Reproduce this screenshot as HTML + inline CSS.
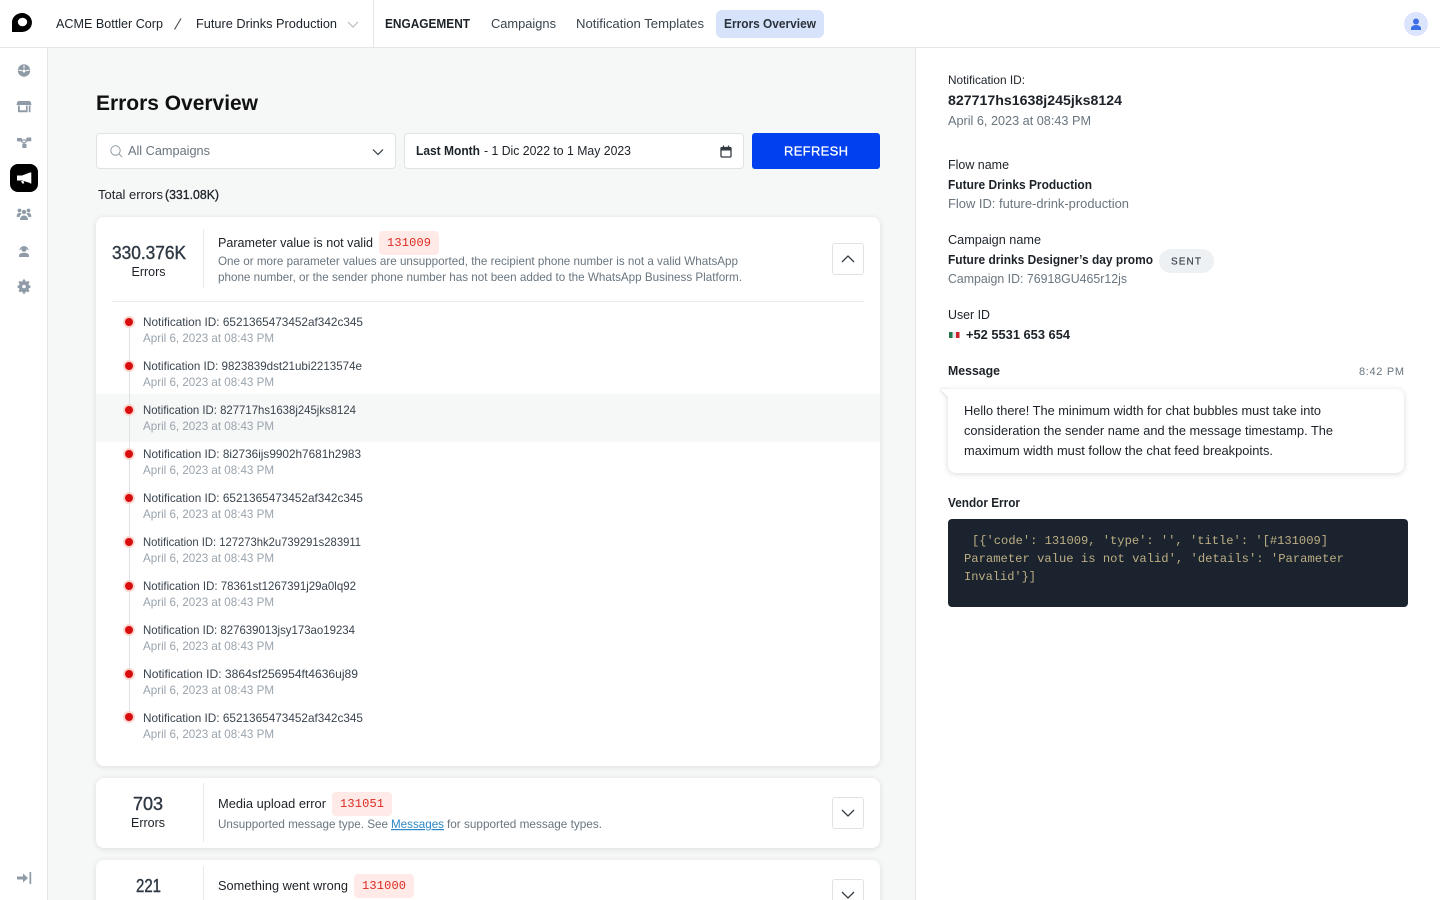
<!DOCTYPE html>
<html lang="en">
<head>
<meta charset="utf-8">
<title>Errors Overview</title>
<style>
html,body{margin:0;padding:0;width:1440px;height:900px;overflow:hidden;background:#fff}
body{font-family:"Liberation Sans",sans-serif;position:relative}
.b{position:absolute;box-sizing:border-box}
#main{left:48px;top:48px;width:867px;height:852px;background:#f6f7f7}
#hline{left:0;top:47px;width:1440px;height:1px;background:#e3e5e7}
#vline{left:47px;top:47px;width:1px;height:853px;background:#e3e5e7}
#rline{left:915px;top:47px;width:1px;height:853px;background:#e3e5e7}
#hdiv{left:373px;top:0;width:1px;height:47px;background:#e3e5e7}
#pill{left:716px;top:10px;width:108px;height:28px;background:#d7e3fa;border-radius:6px}
.field{background:#fff;border:1px solid #dfe3e7;border-radius:4px;height:36px;top:133px}
#refresh{left:752px;top:133px;width:128px;height:36px;background:#0040ee;border-radius:3px}
.card{left:96px;width:784px;background:#fff;border-radius:8px;box-shadow:0 1px 6px rgba(30,45,60,.12)}
#hl{left:96px;top:394px;width:784px;height:48px;background:#f6f7f7}
.vd{width:1px;background:#e8eaec;left:203px}
.chip{width:60px;height:24px;background:#ffeae8;border-radius:4px}
.btn{left:832px;width:32px;height:32px;background:#fff;border:1px solid #dfe3e7;border-radius:3px}
#sent{left:1159px;top:249px;width:55px;height:24px;background:#eef1f3;border-radius:12px}
#bubble{left:948px;top:389px;width:456px;height:84px;background:#fff;border-radius:0 8px 8px 8px;box-shadow:0 1px 6px rgba(30,45,60,.18)}
#code{left:948px;top:519px;width:460px;height:88px;background:#1a232e;border-radius:4px}
#layer{position:absolute;left:0;top:0}
text{font-family:"Liberation Sans",sans-serif;font-size:13px;fill:#1c2228}
.g{fill:#69757f;font-size:12px}
.h{fill:#9aa4ad;font-size:12px}
.n{fill:#3a444e;font-size:12px}
.bd{font-weight:bold}
.md{stroke-width:.3px;stroke:#1c2228}
.mono{font-family:"Liberation Mono",monospace;font-size:12px;fill:#dc2a20}
.code{font-family:"Liberation Mono",monospace;font-size:12px;fill:#bdae84}
.num{font-size:18px;fill:#2f3944;stroke:#2f3944;stroke-width:.4px}
.ic{fill:#8f9ba6}
</style>
</head>
<body>
<div class="b" id="main"></div>
<div class="b" id="hline"></div>
<div class="b" id="vline"></div>
<div class="b" id="rline"></div>
<div class="b" id="hdiv"></div>
<div class="b" id="pill"></div>

<div class="b field" style="left:96px;width:300px"></div>
<div class="b field" style="left:404px;width:340px"></div>
<div class="b" id="refresh"></div>

<div class="b card" style="top:217px;height:549px"></div>
<div class="b" id="hl"></div>
<div class="b vd" style="top:229px;height:59px"></div>
<div class="b" style="left:112px;top:301px;width:752px;height:1px;background:#e8eaec"></div>
<div class="b chip" style="left:379px;top:231px"></div>
<div class="b btn" style="top:243px"></div>

<div class="b card" style="top:778px;height:70px"></div>
<div class="b vd" style="top:783px;height:59px"></div>
<div class="b chip" style="left:332px;top:792px"></div>
<div class="b btn" style="top:797px"></div>

<div class="b card" style="top:860px;height:80px"></div>
<div class="b vd" style="top:866px;height:40px"></div>
<div class="b chip" style="left:354px;top:874px"></div>
<div class="b btn" style="top:879px"></div>

<div class="b" id="sent"></div>
<div class="b" id="bubble"></div>
<div class="b" id="code"></div>

<svg id="layer" width="1440" height="900" viewBox="0 0 1440 900" xmlns="http://www.w3.org/2000/svg">
<!-- logo -->
<path d="M12 32V21.500A10 9.500 0 1 1 22 32Z" fill="#000"/>
<ellipse cx="22.500" cy="22" rx="4.700" ry="4.300" fill="#fff"/>

<!-- header -->
<text x="56" y="28" textLength="107" lengthAdjust="spacingAndGlyphs">ACME Bottler Corp</text>
<path d="M174.500 29.500L181 18.500" stroke="#333b43" stroke-width="1" fill="none"/>
<text x="196" y="28" textLength="141" lengthAdjust="spacingAndGlyphs">Future Drinks Production</text>
<path d="M348 22l5 5 5-5" stroke="#b4bcc3" stroke-width="1.200" fill="none"/>
<text x="385" y="28" textLength="85" lengthAdjust="spacingAndGlyphs" class="bd">ENGAGEMENT</text>
<text x="491" y="28" textLength="65" lengthAdjust="spacingAndGlyphs" style="fill:#3a444e">Campaigns</text>
<text x="576" y="28" textLength="128" lengthAdjust="spacingAndGlyphs" style="fill:#3a444e">Notification Templates</text>
<text x="724" y="28" textLength="92" lengthAdjust="spacingAndGlyphs" class="bd" style="fill:#2a333c">Errors Overview</text>
<circle cx="1416" cy="24" r="12" fill="#dbe5fd"/>
<circle cx="1416" cy="21.500" r="3" fill="#3d6fe6"/>
<path d="M1411 30v-1.500c0-2 2-3.500 5-3.500s5 1.500 5 3.500V30z" fill="#3d6fe6"/>

<!-- sidebar icons -->
<circle cx="24" cy="70.500" r="6.200" class="ic"/>
<path d="M24 65v3.500M18.500 70l3.500 .8M29.500 70l-3.500 .8" stroke="#fff" stroke-width="1" fill="none"/>
<circle cx="24" cy="71" r="1.500" fill="#fff"/>
<path d="M19 101h10c1 0 1.500 .5 1.800 1.200l.7 2.800h-15l.7-2.800c.3-.7 .8-1.200 1.800-1.200z" class="ic"/>
<path d="M18 105.500h1.800v4.800h6.200v-4.800h1.600v6.700H18z" class="ic"/>
<rect x="28.800" y="105.500" width="1.700" height="6.700" class="ic"/>
<path d="M20 140l4 3.500 4-3.500" stroke="#8f9ba6" stroke-width="1.300" fill="none"/>
<path d="M21 140h7" stroke="#8f9ba6" stroke-width="1.200"/>
<rect x="17" y="138" width="4.800" height="3.400" rx=".6" class="ic"/>
<rect x="26.500" y="137.500" width="4.800" height="3.700" rx=".6" class="ic"/>
<rect x="22.300" y="144" width="4.200" height="4" rx=".6" class="ic"/>
<rect x="10" y="164" width="28" height="28" rx="8" fill="#000"/>
<path d="M17 175.500h5l8-3v10.500l-8-2.500h-5z" fill="#fff"/>
<rect x="30" y="172.500" width="1.300" height="11" fill="#fff"/>
<path d="M21 181h2.500l.8 2.500h-2z" fill="#fff"/>
<circle cx="19.500" cy="210.500" r="1.900" class="ic"/>
<circle cx="28.500" cy="210.500" r="1.900" class="ic"/>
<circle cx="24" cy="212" r="2.100" class="ic"/>
<path d="M16.800 217v-1.500c0-1.500 1.200-2.500 3-2.500 .8 0 1.500 .2 2 .6-1.200 .7-2 1.900-2.200 3.400z" class="ic"/>
<path d="M31.200 217v-1.500c0-1.500-1.200-2.500-3-2.500-.8 0-1.500 .2-2 .6 1.200 .7 2 1.900 2.200 3.400z" class="ic"/>
<path d="M20 220c0-2.700 1.600-4.500 4-4.500s4 1.800 4 4.500z" class="ic"/>
<circle cx="24" cy="249" r="2.800" class="ic"/>
<path d="M19.800 250a4.300 4.300 0 0 1 8.400 0" stroke="#8f9ba6" stroke-width="1" fill="none"/>
<path d="M19 257v-1.500c0-1.800 2-2.800 5-2.800s5 1 5 2.800V257z" class="ic"/>
<path d="M23 280.500h2l.4 1.600 1.300.6 1.500-.8 1.300 1.500-1 1.300.4 1.400 1.600.6v2l-1.600.5-.4 1.300 1 1.400-1.300 1.400-1.500-.8-1.300.6-.4 1.600h-2l-.4-1.600-1.300-.6-1.500.8-1.300-1.400 1-1.400-.4-1.300-1.600-.5v-2l1.600-.6.4-1.400-1-1.300 1.300-1.500 1.500.8 1.300-.6z" class="ic" transform="translate(0 -1)"/>
<circle cx="24" cy="286.500" r="1.800" fill="#fff"/>
<path d="M17 876.500h6v-3l5 4.500-5 4.500v-3h-6z" class="ic"/>
<rect x="29.500" y="872" width="1.700" height="12" class="ic"/>

<!-- title and filters -->
<text x="96" y="110" textLength="162" lengthAdjust="spacingAndGlyphs" class="bd" style="font-size:21px;fill:#111">Errors Overview</text>
<circle cx="115.500" cy="150.500" r="4.700" fill="none" stroke="#8f9ba6" stroke-width="1"/>
<path d="M119 154l3 3" stroke="#8f9ba6" stroke-width="1"/>
<text x="128" y="155" textLength="82" lengthAdjust="spacingAndGlyphs" style="fill:#69757f">All Campaigns</text>
<path d="M373 149.500l5 5 5-5" stroke="#333b43" stroke-width="1.200" fill="none"/>
<text x="416" y="155" textLength="64" lengthAdjust="spacingAndGlyphs" class="bd">Last Month</text>
<text x="484" y="155" textLength="147" lengthAdjust="spacingAndGlyphs">- 1 Dic 2022 to 1 May 2023</text>
<rect x="721" y="147.500" width="10" height="9.500" rx="1" fill="none" stroke="#333b43" stroke-width="1.300"/>
<rect x="721" y="147.500" width="10" height="3" fill="#333b43"/>
<path d="M723.500 145.500v2M728.500 145.500v2" stroke="#333b43" stroke-width="1.200"/>
<text x="784" y="155.500" textLength="64" lengthAdjust="spacing" style="fill:#fff;stroke:#fff;stroke-width:.3px">REFRESH</text>
<text x="98" y="199" textLength="65" lengthAdjust="spacingAndGlyphs">Total errors</text>
<text x="165" y="199" textLength="54" lengthAdjust="spacingAndGlyphs" class="md">(331.08K)</text>

<!-- card 1 -->
<text x="112" y="259" textLength="74" lengthAdjust="spacingAndGlyphs" class="num">330.376K</text>
<text x="131.500" y="276" textLength="34" lengthAdjust="spacingAndGlyphs">Errors</text>
<text x="218" y="247" textLength="155" lengthAdjust="spacingAndGlyphs">Parameter value is not valid</text>
<text x="387" y="246" textLength="44" class="mono">131009</text>
<text x="218" y="265" textLength="520" lengthAdjust="spacingAndGlyphs" class="g">One or more parameter values are unsupported, the recipient phone number is not a valid WhatsApp</text>
<text x="218" y="281" textLength="524" lengthAdjust="spacingAndGlyphs" class="g">phone number, or the sender phone number has not been added to the WhatsApp Business Platform.</text>
<path d="M842 262l6-6 6 6" stroke="#333b43" stroke-width="1.300" fill="none"/>

<!-- timeline -->
<path d="M129.500 322V717" stroke="#dfe3e7" stroke-width="1"/>
<g fill="#fbd6d2">
<circle cx="129" cy="322" r="6"/><circle cx="129" cy="366" r="6"/><circle cx="129" cy="410" r="6"/><circle cx="129" cy="454" r="6"/><circle cx="129" cy="498" r="6"/><circle cx="129" cy="542" r="6"/><circle cx="129" cy="586" r="6"/><circle cx="129" cy="630" r="6"/><circle cx="129" cy="674" r="6"/><circle cx="129" cy="717" r="6"/>
</g>
<g fill="#d80e0e">
<circle cx="129" cy="322" r="4"/><circle cx="129" cy="366" r="4"/><circle cx="129" cy="410" r="4"/><circle cx="129" cy="454" r="4"/><circle cx="129" cy="498" r="4"/><circle cx="129" cy="542" r="4"/><circle cx="129" cy="586" r="4"/><circle cx="129" cy="630" r="4"/><circle cx="129" cy="674" r="4"/><circle cx="129" cy="717" r="4"/>
</g>
<text x="143" y="326" textLength="220" lengthAdjust="spacingAndGlyphs" class="n">Notification ID: 6521365473452af342c345</text>
<text x="143" y="342" textLength="131" lengthAdjust="spacingAndGlyphs" class="h">April 6, 2023 at 08:43 PM</text>
<text x="143" y="370" textLength="219" lengthAdjust="spacingAndGlyphs" class="n">Notification ID: 9823839dst21ubi2213574e</text>
<text x="143" y="386" textLength="131" lengthAdjust="spacingAndGlyphs" class="h">April 6, 2023 at 08:43 PM</text>
<text x="143" y="414" textLength="213" lengthAdjust="spacingAndGlyphs" class="n">Notification ID: 827717hs1638j245jks8124</text>
<text x="143" y="430" textLength="131" lengthAdjust="spacingAndGlyphs" class="h">April 6, 2023 at 08:43 PM</text>
<text x="143" y="458" textLength="218" lengthAdjust="spacingAndGlyphs" class="n">Notification ID: 8i2736ijs9902h7681h2983</text>
<text x="143" y="474" textLength="131" lengthAdjust="spacingAndGlyphs" class="h">April 6, 2023 at 08:43 PM</text>
<text x="143" y="502" textLength="220" lengthAdjust="spacingAndGlyphs" class="n">Notification ID: 6521365473452af342c345</text>
<text x="143" y="518" textLength="131" lengthAdjust="spacingAndGlyphs" class="h">April 6, 2023 at 08:43 PM</text>
<text x="143" y="546" textLength="218" lengthAdjust="spacingAndGlyphs" class="n">Notification ID: 127273hk2u739291s283911</text>
<text x="143" y="562" textLength="131" lengthAdjust="spacingAndGlyphs" class="h">April 6, 2023 at 08:43 PM</text>
<text x="143" y="590" textLength="213" lengthAdjust="spacingAndGlyphs" class="n">Notification ID: 78361st1267391j29a0lq92</text>
<text x="143" y="606" textLength="131" lengthAdjust="spacingAndGlyphs" class="h">April 6, 2023 at 08:43 PM</text>
<text x="143" y="634" textLength="212" lengthAdjust="spacingAndGlyphs" class="n">Notification ID: 827639013jsy173ao19234</text>
<text x="143" y="650" textLength="131" lengthAdjust="spacingAndGlyphs" class="h">April 6, 2023 at 08:43 PM</text>
<text x="143" y="678" textLength="215" lengthAdjust="spacingAndGlyphs" class="n">Notification ID: 3864sf256954ft4636uj89</text>
<text x="143" y="694" textLength="131" lengthAdjust="spacingAndGlyphs" class="h">April 6, 2023 at 08:43 PM</text>
<text x="143" y="722" textLength="220" lengthAdjust="spacingAndGlyphs" class="n">Notification ID: 6521365473452af342c345</text>
<text x="143" y="738" textLength="131" lengthAdjust="spacingAndGlyphs" class="h">April 6, 2023 at 08:43 PM</text>

<!-- card 2 -->
<text x="133" y="810" textLength="30" lengthAdjust="spacingAndGlyphs" class="num">703</text>
<text x="131" y="827" textLength="34" lengthAdjust="spacingAndGlyphs">Errors</text>
<text x="218" y="808" textLength="108" lengthAdjust="spacingAndGlyphs">Media upload error</text>
<text x="340" y="807" textLength="44" class="mono">131051</text>
<text x="218" y="828" textLength="170" lengthAdjust="spacingAndGlyphs" class="g">Unsupported message type. See</text>
<text x="391" y="828" textLength="53" lengthAdjust="spacingAndGlyphs" class="g" style="fill:#2c87c6;text-decoration:underline">Messages</text>
<text x="447" y="828" textLength="155" lengthAdjust="spacingAndGlyphs" class="g">for supported message types.</text>
<path d="M842 810l6 6 6-6" stroke="#333b43" stroke-width="1.300" fill="none"/>

<!-- card 3 -->
<text x="136" y="892" textLength="25" lengthAdjust="spacingAndGlyphs" class="num">221</text>
<text x="218" y="890" textLength="130" lengthAdjust="spacingAndGlyphs">Something went wrong</text>
<text x="362" y="889" textLength="44" class="mono">131000</text>
<path d="M842 892l6 6 6-6" stroke="#333b43" stroke-width="1.300" fill="none"/>

<!-- right panel -->
<text x="948" y="84" textLength="77" lengthAdjust="spacingAndGlyphs" style="font-size:12px">Notification ID:</text>
<text x="948" y="105" textLength="174" lengthAdjust="spacingAndGlyphs" class="bd" style="font-size:14px">827717hs1638j245jks8124</text>
<text x="948" y="125" textLength="143" lengthAdjust="spacingAndGlyphs" style="fill:#69757f">April 6, 2023 at 08:43 PM</text>
<text x="948" y="169" textLength="61" lengthAdjust="spacingAndGlyphs">Flow name</text>
<text x="948" y="189" textLength="144" lengthAdjust="spacingAndGlyphs" class="bd">Future Drinks Production</text>
<text x="948" y="208" textLength="181" lengthAdjust="spacingAndGlyphs" style="fill:#69757f">Flow ID: future-drink-production</text>
<text x="948" y="244" textLength="93" lengthAdjust="spacingAndGlyphs">Campaign name</text>
<text x="948" y="264" textLength="205" lengthAdjust="spacingAndGlyphs" class="bd">Future drinks Designer’s day promo</text>
<text x="1171" y="264.500" textLength="30" lengthAdjust="spacing" style="font-size:10px;fill:#3a444e;stroke:#3a444e;stroke-width:.2px">SENT</text>
<text x="948" y="283" textLength="179" lengthAdjust="spacingAndGlyphs" style="fill:#69757f">Campaign ID: 76918GU465r12js</text>
<text x="948" y="319" textLength="42" lengthAdjust="spacingAndGlyphs">User ID</text>
<rect x="949" y="332" width="3.500" height="6" fill="#1f7a4d"/>
<rect x="952.500" y="332" width="3.500" height="6" fill="#e8e8e8"/>
<rect x="956" y="332" width="3.500" height="6" fill="#c8252c"/>
<text x="966" y="339" textLength="104" lengthAdjust="spacingAndGlyphs" class="bd">+52 5531 653 654</text>
<text x="948" y="375" textLength="52" lengthAdjust="spacingAndGlyphs" class="bd">Message</text>
<text x="1359" y="375" textLength="45" lengthAdjust="spacing" style="font-size:11px;fill:#69757f">8:42 PM</text>
<path d="M940 389h9v9z" fill="#fff" style="filter:drop-shadow(-1px 0 1.500px rgba(30,45,60,.18))"/>
<rect x="948" y="389" width="6" height="10" fill="#fff"/>
<text x="964" y="415" textLength="357" lengthAdjust="spacingAndGlyphs">Hello there! The minimum width for chat bubbles must take into</text>
<text x="964" y="435" textLength="369" lengthAdjust="spacingAndGlyphs">consideration the sender name and the message timestamp. The</text>
<text x="964" y="455" textLength="309" lengthAdjust="spacingAndGlyphs">maximum width must follow the chat feed breakpoints.</text>
<text x="948" y="507" textLength="72" lengthAdjust="spacingAndGlyphs" class="bd">Vendor Error</text>
<text x="972" y="544" textLength="356" lengthAdjust="spacingAndGlyphs" class="code">[{'code': 131009, 'type': '', 'title': '[#131009]</text>
<text x="964" y="562" textLength="380" lengthAdjust="spacingAndGlyphs" class="code">Parameter value is not valid', 'details': 'Parameter</text>
<text x="964" y="580" textLength="72" lengthAdjust="spacingAndGlyphs" class="code">Invalid'}]</text>
</svg>
</body>
</html>
